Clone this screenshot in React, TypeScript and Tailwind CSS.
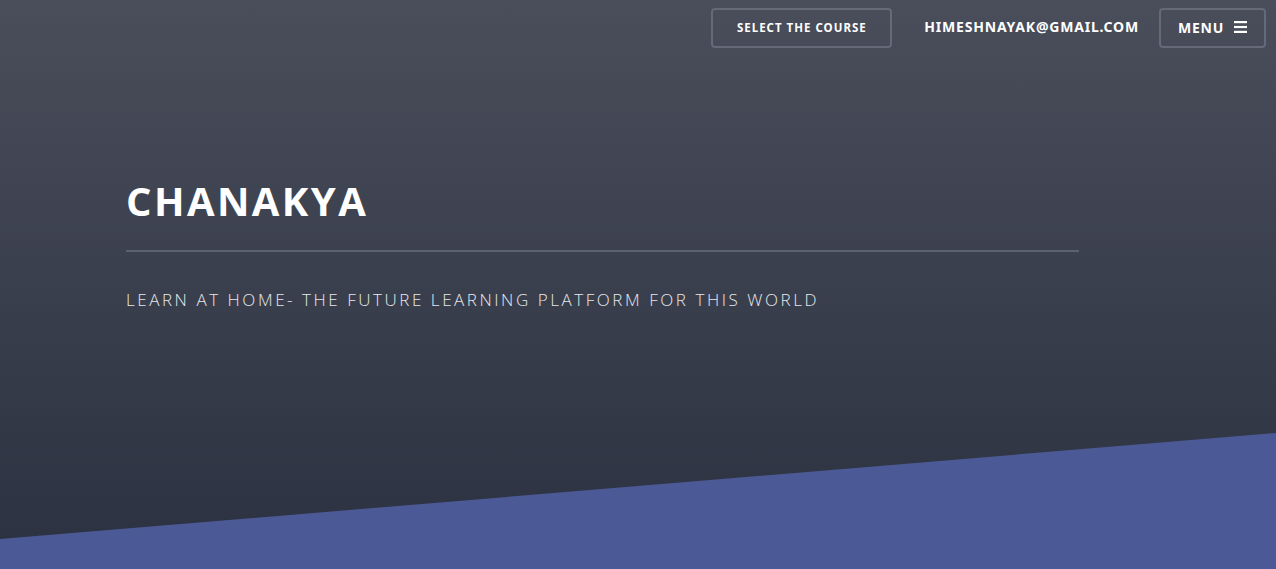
const NAV_FONT = { fontFamily: '"Noto Sans", "Open Sans", sans-serif' };

const Header = () => {
  return (
    <nav className="flex items-center justify-end gap-[32px] pt-[8px] pr-[10px]" style={NAV_FONT}>
      <button className="flex h-[40px] w-[181px] items-center justify-center rounded-[4px] border-2 border-[#646a78] pb-[1px] text-[11.5px] font-bold tracking-[1px] text-white">
        SELECT THE COURSE
      </button>
      <div className="flex items-center gap-[20px]">
        <span className="pb-[3px] text-[14px] font-bold tracking-[0.8px] text-white">HIMESHNAYAK@GMAIL.COM</span>
        <button className="flex h-[40px] w-[107px] items-center justify-center gap-[10px] rounded-[4px] border-2 border-[#646a78] pb-[2px] text-[14px] font-bold tracking-[0.8px] text-white">
          MENU
          <svg width="13" height="12" viewBox="0 0 13 12" fill="#fff">
            <rect x="0" y="0" width="13" height="2.2" />
            <rect x="0" y="4.9" width="13" height="2.2" />
            <rect x="0" y="9.8" width="13" height="2.2" />
          </svg>
        </button>
      </div>
    </nav>
  );
};

const App = () => {
  return (
    <div className="relative h-[569px] w-full overflow-hidden bg-gradient-to-b from-[#4a4e5b] to-[#2b3140]">
      <Header />
      <div className="px-[126px] pt-[129px]" style={{ fontFamily: '"Open Sans", "Noto Sans", sans-serif' }}>
        <h1 className="text-[40px] leading-[48px] font-bold tracking-[2.4px] text-white">CHANAKYA</h1>
        <div className="mt-[25px] h-[2px] w-[953px] bg-[#5d6271]" />
        <p className="mt-[36px] text-[17px] leading-[24px] font-light tracking-[2.55px] text-[#e6e8ec]">
          LEARN AT HOME- THE FUTURE LEARNING PLATFORM FOR THIS WORLD
        </p>
      </div>
      <svg className="absolute bottom-0 left-0" width="1276" height="136" viewBox="0 0 1276 136" preserveAspectRatio="none">
        <polygon points="0,106 1276,0 1276,136 0,136" fill="#4b5a96" />
      </svg>
    </div>
  );
};

export default App;
